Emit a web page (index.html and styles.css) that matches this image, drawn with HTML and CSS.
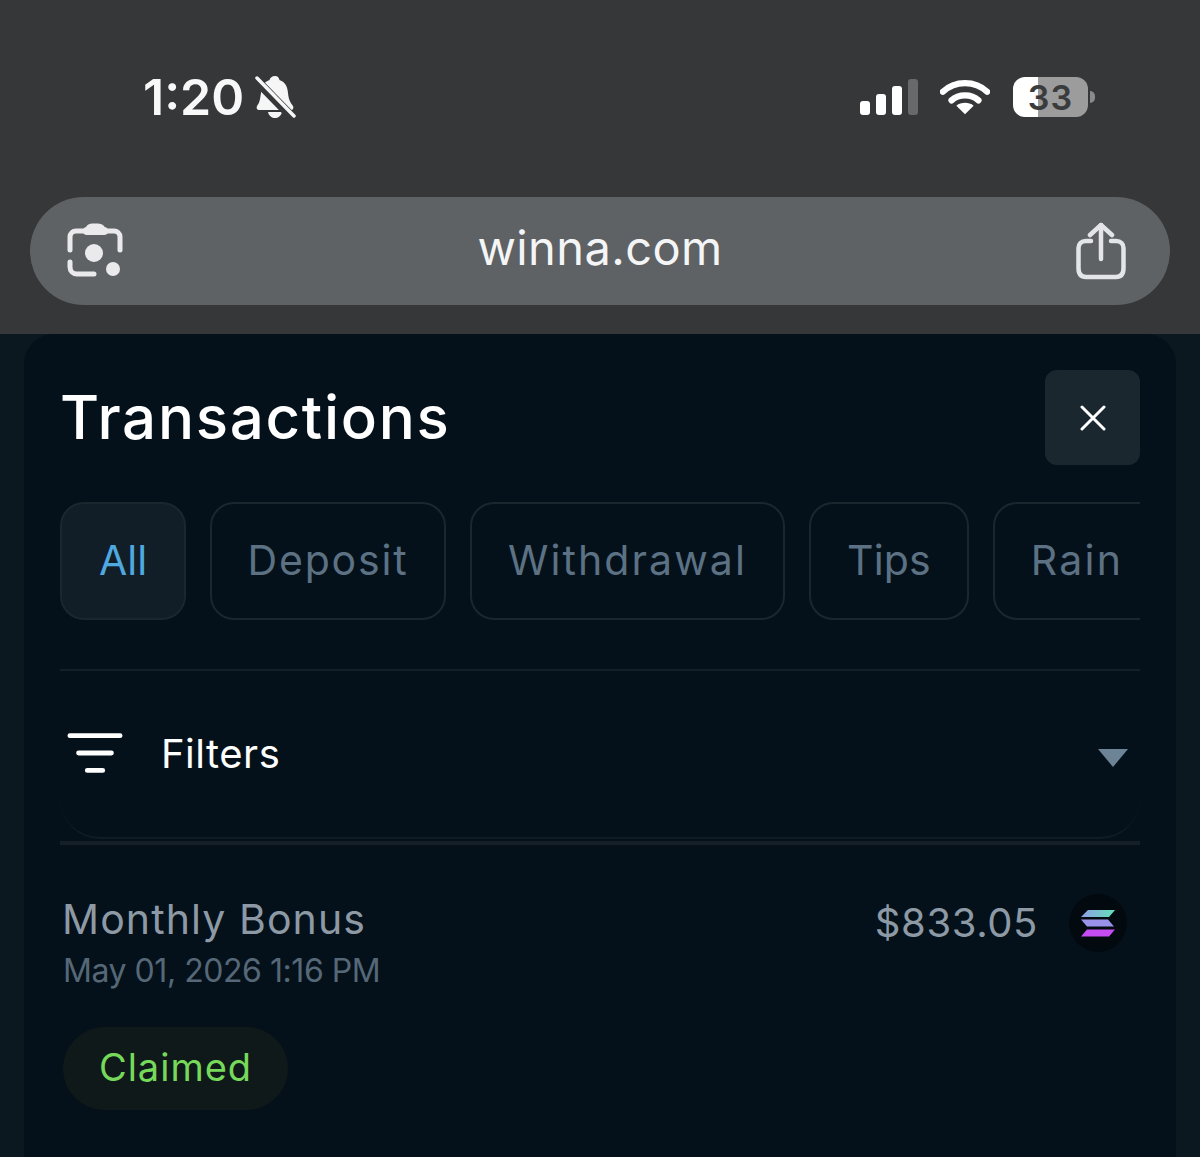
FILE: index.html
```html
<!DOCTYPE html>
<html lang="en">
<head>
    <meta charset="UTF-8">
    <meta name="viewport" content="width=device-width, initial-scale=1.0">
    <title>Transactions</title>
    <link rel="stylesheet" href="styles.css">
</head>
<body>
    <header class="browser">
        <div class="status">
            <div class="status-left">
                <span class="time">1:20</span>
                <svg class="bell" width="42" height="44" viewBox="0 0 42 44">
                    <path d="M21 1c3 0 4 2 4.500 4 6 2 8 7 8.500 13 .5 6 2 9 5 13 1 2 0 4-2 4H5c-2 0-3-2-2-4 3-4 3-7 4-13 .5-6 2.500-11 8.500-13C16 3 18 1 21 1z" fill="#f6f6f6"/>
                    <path d="M14 37h14c-1 4-4 6-7 6s-6-2-7-6z" fill="#f6f6f6"/>
                    <path d="M1 4l37 38" stroke="#363738" stroke-width="9"/>
                    <path d="M3 3l37 38" stroke="#f6f6f6" stroke-width="3.500" stroke-linecap="round"/>
                </svg>
            </div>
            <div class="status-right">
                <div class="signal">
                    <span class="bar bar-1"></span>
                    <span class="bar bar-2"></span>
                    <span class="bar bar-3"></span>
                    <span class="bar bar-4"></span>
                </div>
                <svg class="wifi" width="50" height="38" viewBox="0 0 52 38" fill="none">
                    <path d="M3 13.500C15.500 1.500 36.500 1.500 49 13.500" stroke="#fff" stroke-width="6.500" stroke-linecap="round"/>
                    <path d="M12 22.500C19.500 15.500 32.500 15.500 40 22.500" stroke="#fff" stroke-width="6.500" stroke-linecap="round"/>
                    <path d="M26 37l-9-9c5-4 13-4 18 0z" fill="#fff"/>
                </svg>
                <div class="battery">
                    <span class="battery-level">33</span>
                    <span class="battery-tip"></span>
                </div>
            </div>
        </div>
        <div class="address">
            <svg width="58" height="58" viewBox="0 0 58 58" fill="none" stroke="#eaeaec" stroke-width="5" stroke-linecap="round">
                <path d="M4 28V15c0-4 3-6 6-6h11c1-4 3-5 5-5h6c3 0 4 1 6 5h10c3 0 6 2 6 6v13" />
                <path d="M21 9h17" stroke-width="8"/>
                <path d="M28 52H11c-4 0-7-3-7-7v-5"/>
                <circle cx="28" cy="31" r="9" fill="#eaeaec" stroke="none"/>
                <circle cx="47" cy="47" r="7" fill="#eaeaec" stroke="none"/>
            </svg>
            <span class="url">winna.com</span>
            <svg width="50" height="58" viewBox="0 0 50 58" fill="none" stroke="#e4e5e8" stroke-width="4.500" stroke-linecap="round" stroke-linejoin="round">
                <path d="M15 19H10c-5 0-7.500 3-7.500 7v20c0 6 2.500 9 7.500 9h30c5 0 7.500-3 7.500-9V26c0-4-2.500-7-7.500-7h-5"/>
                <path d="M25 37V3"/>
                <path d="M14 13L25 3l11 10"/>
            </svg>
        </div>
    </header>

    <main class="page">
        <section class="panel">
            <div class="panel-head">
                <h1>Transactions</h1>
                <button class="close">
                    <svg width="26" height="26" viewBox="0 0 26 26" stroke="#fff" stroke-width="3" stroke-linecap="round">
                        <path d="M2 2l22 22M24 2L2 24"/>
                    </svg>
                </button>
            </div>

            <div class="tabs">
                <button class="tab tab-active">All</button>
                <button class="tab tab-deposit">Deposit</button>
                <button class="tab tab-withdrawal">Withdrawal</button>
                <button class="tab tab-tips">Tips</button>
                <button class="tab tab-rain">Rain</button>
            </div>

            <div class="filters">
                <div class="filters-row">
                    <svg class="filters-icon" width="56" height="44" viewBox="0 0 58 44" stroke="#fff" stroke-width="5" stroke-linecap="round">
                        <path d="M3 3h52M12 21h34M21 39h16"/>
                    </svg>
                    <span class="filters-label">Filters</span>
                    <span class="caret"></span>
                </div>
            </div>

            <div class="tx">
                <div class="tx-top">
                    <div>
                        <div class="tx-name">Monthly Bonus</div>
                        <div class="tx-date">May 01, 2026 1:16 PM</div>
                    </div>
                    <div class="tx-amount">
                        <span class="tx-value">$833.05</span>
                        <span class="coin">
                            <svg width="34" height="28" viewBox="0 0 34 28">
                                <defs>
                                    <linearGradient id="sol-top" x1="0" y1="0" x2="1" y2="0">
                                        <stop offset="0" stop-color="#8f9fe8"/>
                                        <stop offset="1" stop-color="#62e0b6"/>
                                    </linearGradient>
                                </defs>
                                <path d="M7 1h27l-6 7H0z" fill="url(#sol-top)"/>
                                <path d="M0 10.500h27l6 7H6z" fill="#9b93ea"/>
                                <path d="M6 20.500h28l-6 7H0z" fill="#c44cf0"/>
                            </svg>
                        </span>
                    </div>
                </div>
                <span class="badge">Claimed</span>
            </div>
        </section>
    </main>
</body>
</html>
```

FILE: styles.css
```css
* {
    box-sizing: border-box;
}
html, body {
    height: 100%;
}
body {
    margin: 0;
    height: 1157px;
    overflow: hidden;
    display: flex;
    flex-direction: column;
    font-family: Inter, "Open Sans", sans-serif;
    background-color: #0c1820;
}
.browser {
    height: 334px;
    flex-shrink: 0;
    padding: 77px 30px 0;
    background-color: #363738;
}
.status {
    height: 40px;
    display: flex;
    justify-content: space-between;
    align-items: center;
    padding: 0 75px 0 113px;
}
.status-left {
    display: flex;
    align-items: center;
    gap: 10px;
}
.time {
    font-size: 50px;
    font-weight: 600;
    line-height: 40px;
    color: #f8f8f8;
}
.status-right {
    display: flex;
    align-items: center;
}
.signal {
    display: flex;
    align-items: flex-end;
    gap: 6px;
    height: 36px;
    margin-right: 22px;
}
.bar {
    width: 10px;
    border-radius: 3px;
    background-color: #fff;
}
.bar-1 { height: 14px; }
.bar-2 { height: 21px; }
.bar-3 { height: 29px; }
.bar-4 { height: 36px; background-color: #68696a; }
.wifi {
    margin-right: 23px;
}
.battery {
    display: flex;
    align-items: center;
    gap: 2px;
}
.battery-level {
    width: 75px;
    height: 40px;
    border-radius: 12px;
    background: linear-gradient(to right, #fff 25px, #9c9c9d 25px);
    color: #3a3b3c;
    font-size: 34px;
    font-weight: 600;
    line-height: 41px;
    letter-spacing: 1px;
    text-align: center;
}
.battery-tip {
    width: 5px;
    height: 12px;
    border-radius: 0 6px 6px 0;
    background-color: #8a8a8b;
}
.address {
    height: 108px;
    margin-top: 80px;
    padding: 0 44px 0 36px;
    display: flex;
    align-items: center;
    justify-content: space-between;
    border-radius: 54px;
    background-color: #5f6265;
}
.url {
    font-size: 47px;
    letter-spacing: 0.4px;
    color: #f4f5f6;
    margin-bottom: 7px;
}
.page {
    flex: 1;
    padding: 0 24px;
}
.panel {
    height: 100%;
    padding: 36px 36px 0;
    border-radius: 30px 30px 0 0;
    background-color: #04111a;
}
.panel-head {
    display: flex;
    justify-content: space-between;
    align-items: center;
}
h1 {
    margin: 0 0 2px;
    font-size: 60px;
    font-weight: 500;
    color: #fff;
    letter-spacing: 1.700px;
}
.close {
    width: 95px;
    height: 95px;
    display: flex;
    align-items: center;
    justify-content: center;
    padding: 0;
    border: none;
    border-radius: 12px;
    background-color: #1b272f;
}
.tabs {
    display: flex;
    gap: 24px;
    margin-top: 37px;
    overflow: hidden;
}
.tab {
    flex-shrink: 0;
    height: 118px;
    padding: 0 0 2px;
    border: 2px solid #1b272f;
    border-radius: 24px;
    background: none;
    color: #5c7183;
    font-family: inherit;
    font-size: 41px;
    letter-spacing: 1.800px;
}
.tab-active {
    width: 126px;
    background-color: #121e27;
    color: #4fa8e0;
    letter-spacing: 0;
}
.tab-deposit { width: 236px; }
.tab-withdrawal { width: 315px; letter-spacing: 2.100px; }
.tab-tips { width: 160px; letter-spacing: 0.200px; }
.tab-rain { width: 170px; padding-right: 2px; letter-spacing: 2.300px; }
.filters {
    margin-top: 49px;
    height: 176px;
    border-top: 2px solid #141f27;
    border-bottom: 4px solid #141f27;
}
.filters-row {
    height: 168px;
    padding: 0 12px 0 7px;
    display: flex;
    align-items: center;
    border-radius: 0 0 40px 40px;
    border-bottom: 2px solid #101b23;
}
.filters-label {
    margin-left: 38px;
    margin-bottom: 2px;
    flex: 1;
    font-size: 40px;
    letter-spacing: 0.500px;
    color: #fff;
}
.caret {
    margin-top: 8px;
    width: 0;
    height: 0;
    border-left: 15px solid transparent;
    border-right: 15px solid transparent;
    border-top: 18px solid #6d8497;
}
.tx {
    padding: 47px 13px 0 3px;
}
.tx-top {
    display: flex;
    justify-content: space-between;
    align-items: flex-start;
}
.tx-name {
    font-size: 41px;
    line-height: 54px;
    letter-spacing: 1.100px;
    margin-left: -1px;
    color: #8d9aa5;
}
.tx-date {
    font-size: 32px;
    line-height: 50px;
    letter-spacing: -0.450px;
    color: #566877;
}
.tx-amount {
    margin-top: 2px;
    display: flex;
    align-items: center;
    gap: 31px;
    font-size: 40px;
    color: #8d9aa5;
}
.tx-value {
    margin-bottom: 2px;
    letter-spacing: 0.600px;
}
.coin {
    width: 58px;
    height: 58px;
    display: flex;
    align-items: center;
    justify-content: center;
    border-radius: 50%;
    background-color: #020a10;
}
.badge {
    display: inline-block;
    margin-top: 31px;
    width: 225px;
    height: 83px;
    border-radius: 42px;
    background-color: #10191a;
    color: #76d95a;
    font-size: 38px;
    line-height: 80px;
    letter-spacing: 1px;
    text-align: center;
}
```
